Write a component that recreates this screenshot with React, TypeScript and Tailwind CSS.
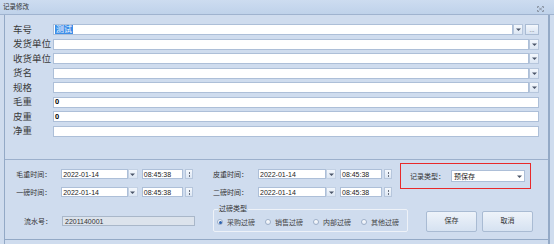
import React from "react";

const font = "font-['Liberation_Sans','Noto_Sans_CJK_SC',sans-serif]";

const Arrow = () => (
   <svg width="5" height="3" viewBox="0 0 5 3">
      <path d="M0 0.5h5L2.5 3z" fill="#4a5568" />
   </svg>
);

const DropBtn = ({ className = "" }: { className?: string }) => (
   <div
      className={`w-[10px] h-full border border-[#b6c6dc] bg-gradient-to-b from-[#f4f8fd] to-[#dce6f3] flex items-center justify-center ${className}`}
   >
      <Arrow />
   </div>
);

const Spinner = () => (
   <div className="ml-[2px] w-[8px] h-full border border-[#b6c6dc] bg-gradient-to-b from-[#f4f8fd] to-[#dce6f3] flex flex-col items-center justify-center gap-[1px]">
      <span className="block w-[1px] h-[2px] bg-[#6b7280]" />
      <span className="block w-[1px] h-[2px] bg-[#6b7280]" />
   </div>
);

interface RowProps {
   label: string;
   combo?: boolean;
   value?: React.ReactNode;
   more?: boolean;
}

const TopRow: React.FC<RowProps> = ({ label, combo, value, more }) => (
   <div className="flex items-center h-[11px]">
      <div className="w-[40px] text-[9.5px] leading-none text-[#3b3b3b] whitespace-nowrap">
         {label}
      </div>
      <div className="flex-1 h-full flex">
         <div className="flex-1 h-full bg-white border border-[#adbfd8] flex items-center pl-px">
            {value}
         </div>
         {combo && <DropBtn />}
         {more && (
            <div className="ml-[2px] w-[14px] h-full border border-[#a9bbd3] bg-gradient-to-b from-[#f4f8fd] to-[#d8e3f2] flex items-center justify-center text-[6px] leading-none text-[#444]">
               ...
            </div>
         )}
      </div>
   </div>
);

const TimeRow = ({ label, lw }: { label: string; lw: string }) => (
   <div className="flex items-center h-[10px]">
      <div className={`${lw} text-[7px] leading-none text-[#333] text-right whitespace-nowrap`}>
         {label}
      </div>
      <div className="ml-[10px] w-[68px] h-full bg-white border border-[#adbfd8] text-[7px] leading-none text-[#222] flex items-center pl-[1px]">
         2022-01-14
      </div>
      <DropBtn className="w-[9px] border-[#c3d1e4]" />
      <div className="ml-[4px] w-[42px] h-full bg-white border border-[#adbfd8] text-[7px] leading-none text-[#222] flex items-center pl-[1px]">
         08:45:38
      </div>
      <Spinner />
   </div>
);

const Radio = ({ label, checked }: { label: string; checked?: boolean }) => (
   <div className="flex items-center gap-[4px]">
      <div className="w-[6px] h-[6px] rounded-full border border-[#9fb0c8] bg-gradient-to-b from-white to-[#e3eaf4] flex items-center justify-center">
         {checked && <div className="w-[3px] h-[3px] rounded-full bg-[#2b62b0]" />}
      </div>
      <span className="text-[7px] leading-none text-[#444] whitespace-nowrap">{label}</span>
   </div>
);

const Btn = ({ label }: { label: string }) => (
   <div className="w-[51px] h-[21px] rounded-[2px] border border-[#a9bbd3] bg-gradient-to-b from-[#eef3fa] to-[#d6e2f1] flex items-center justify-center text-[7px] text-[#333]">
      {label}
   </div>
);

export default function App() {
   return (
      <div className={`w-[554px] h-[244px] bg-[#cfdcee] overflow-hidden flex flex-col ${font}`}>
         {/* title */}
         <div className="h-[15px] shrink-0 bg-gradient-to-b from-[#cddcf0] to-[#bfd2ea] border-b border-[#9fb3cf] flex items-center pl-[3px] pr-[10px]">
            <span className="text-[6.5px] text-[#333] leading-none">记录修改</span>
            <svg className="ml-auto mt-[3px]" width="7" height="6" viewBox="0 0 7 6">
               <path d="M0.5 2V0.5H2M5 0.5h1.5V2M6.5 4v1.5H5M2 5.5H0.5V4" stroke="#8a94a3" fill="none" />
               <path d="M2 1.5l3 3M5 1.5L2 4.5" stroke="#8a94a3" />
            </svg>
         </div>

         <div className="flex-1 mx-[4px] border-l border-r-2 border-[#93a9c6] flex flex-col">
            {/* top fields */}
            <div className="h-[145px] shrink-0 pt-[9px] pl-[8px] pr-[9px] flex flex-col gap-[3.5px] border-b border-[#9cb0cc]">
               <TopRow
                  label="车号"
                  combo
                  more
                  value={
                     <span className="bg-[#3d8ee8] text-white text-[8px] leading-[9px] px-px">测试</span>
                  }
               />
               <TopRow label="发货单位" combo />
               <TopRow label="收货单位" combo />
               <TopRow label="货名" combo />
               <TopRow label="规格" combo />
               <TopRow label="毛重" value={<span className="text-[7.5px] font-bold leading-none text-black">0</span>} />
               <TopRow label="皮重" value={<span className="text-[7.5px] font-bold leading-none text-black">0</span>} />
               <TopRow label="净重" />
            </div>

            {/* bottom */}
            <div className="flex-1 border-b border-[#93a9c6] flex flex-col">
               <div className="flex items-start pt-[3px]">
                  <div className="mt-[6px] flex flex-col gap-[8px] w-[188px]">
                     <TimeRow label="毛重时间：" lw="w-[47px]" />
                     <TimeRow label="一磅时间：" lw="w-[47px]" />
                  </div>
                  <div className="ml-[20px] mt-[6px] flex flex-col gap-[8px]">
                     <TimeRow label="皮重时间：" lw="w-[35px]" />
                     <TimeRow label="二磅时间：" lw="w-[35px]" />
                  </div>
                  <div className="ml-[8px] w-[131px] h-[26px] border border-[#e8292b] flex items-center pl-[9px]">
                     <span className="text-[7px] leading-none text-[#333] whitespace-nowrap">记录类型：</span>
                     <div className="ml-[6px] w-[74px] h-[12px] bg-white border border-[#adbfd8] flex items-center pl-[2px] text-[7px] leading-none text-[#222]">
                        预保存
                        <DropBtn className="ml-auto w-[9px] border-0 bg-none bg-transparent" />
                     </div>
                  </div>
               </div>

               <div className="mt-[12px] flex items-start">
                  <div className="mt-[7px] flex items-center h-[10px]">
                     <div className="w-[47px] text-right text-[7px] leading-none text-[#333]">流水号：</div>
                     <div className="ml-[10px] w-[133px] h-full bg-[#dce3ec] border border-[#a9b7c9] flex items-center pl-[2px] text-[7px] leading-none text-[#333]">
                        2201140001
                     </div>
                  </div>
                  <div className="ml-[18px] relative w-[195px] h-[23px] border border-[#eef2f8] rounded-[2px] flex items-center pl-[3px] pt-[3px] gap-[10px]">
                     <span className="absolute left-[4px] top-[-5px] px-px bg-[#cfdcee] text-[7px] leading-none text-[#333]">
                        过磅类型
                     </span>
                     <Radio label="采购过磅" checked />
                     <Radio label="销售过磅" />
                     <Radio label="内部过磅" />
                     <Radio label="其他过磅" />
                  </div>
                  <div className="ml-[18px] mt-[2px] flex gap-[5px]">
                     <Btn label="保存" />
                     <Btn label="取消" />
                  </div>
               </div>
            </div>
            <div className="h-[4px] shrink-0" />
         </div>
      </div>
   );
}
